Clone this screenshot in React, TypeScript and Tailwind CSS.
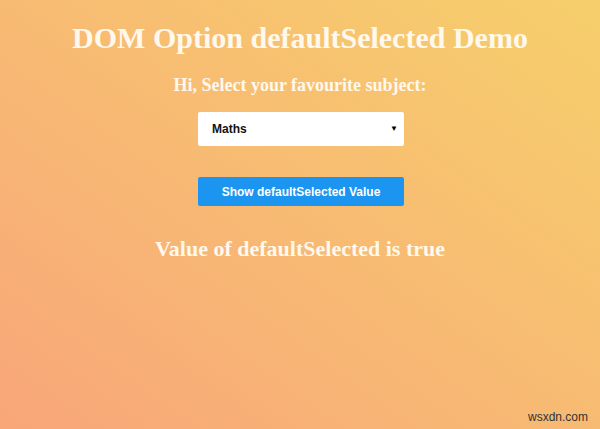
export default function App() {
  return (
    <div className="relative h-[429px] w-full overflow-hidden bg-linear-to-tr from-[#f8a679] to-[#f6cf6b]">
      <div className="flex flex-col items-center pt-[19px]">
        <h1 className="font-['Liberation_Serif','Times_New_Roman',serif] text-[30px] leading-[38px] font-bold text-[#fff8ec]">
          DOM Option defaultSelected Demo
        </h1>
        <h3 className="mt-[18px] font-['Liberation_Serif','Times_New_Roman',serif] text-[18px] leading-[20px] font-bold text-[#fff8ec]">
          Hi, Select your favourite subject:
        </h3>
        <div className="mt-[17px] ml-[2px] flex h-[34px] w-[206px] items-center justify-between rounded-[2px] bg-white pl-[14px] pr-[6px] font-['Liberation_Sans',Arial,sans-serif] text-[12px] font-bold text-[#111]">
          <span>Maths</span>
          <span className="text-[8px] text-black">▼</span>
        </div>
        <button className="mt-[31px] ml-[2px] h-[29px] w-[206px] rounded-[2px] bg-[#1b95ef] font-['Liberation_Sans',Arial,sans-serif] text-[12px] font-bold text-white">
          Show defaultSelected Value
        </button>
        <p className="mt-[29px] font-['Liberation_Serif','Times_New_Roman',serif] text-[22px] leading-[28px] font-bold text-[#fff8ec]">
          Value of defaultSelected is true
        </p>
      </div>
      <span className="absolute right-[12px] bottom-[3px] font-['Liberation_Sans',Arial,sans-serif] text-[12px] text-[#333]">
        wsxdn.com
      </span>
    </div>
  );
}
